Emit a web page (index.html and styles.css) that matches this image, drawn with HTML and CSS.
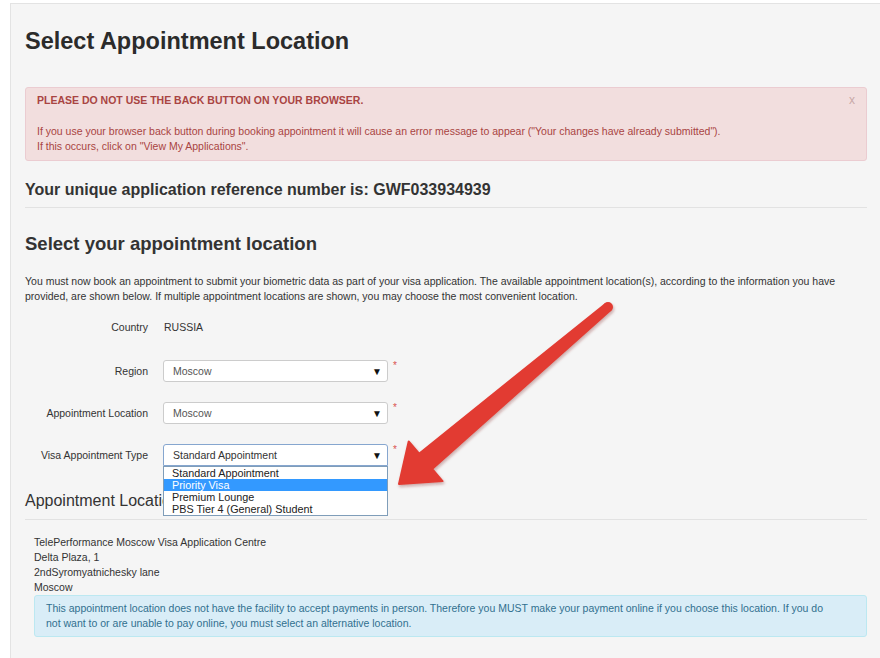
FILE: index.html
```html
<!DOCTYPE html>
<html>
  <head>
    <title>Select Appointment Location</title>
    <link rel="stylesheet" href="styles.css">
  </head>
  <body>
    <div class="page">
      <h1 class="page-title">Select Appointment Location</h1>

      <div class="alert alert-danger">
        <span class="close">x</span>
        <div class="alert-head">PLEASE DO NOT USE THE BACK BUTTON ON YOUR BROWSER.</div>
        <div>If you use your browser back button during booking appointment it will cause an error message to appear ("Your changes have already submitted").</div>
        <div>If this occurs, click on "View My Applications".</div>
      </div>

      <h3 class="ref-title">Your unique application reference number is: GWF033934939</h3>

      <h2 class="section-title">Select your appointment location</h2>
      <p class="intro">You must now book an appointment to submit your biometric data as part of your visa application. The available appointment location(s), according to the information you have provided, are shown below. If multiple appointment locations are shown, you may choose the most convenient location.</p>

      <div class="form">
        <div class="form-row">
          <label>Country</label>
          <span class="static">RUSSIA</span>
        </div>
        <div class="form-row">
          <label>Region</label>
          <div class="select"><span>Moscow</span><span class="caret">&#9660;</span></div>
          <span class="req">*</span>
        </div>
        <div class="form-row">
          <label>Appointment Location</label>
          <div class="select"><span>Moscow</span><span class="caret">&#9660;</span></div>
          <span class="req">*</span>
        </div>
        <div class="form-row">
          <label>Visa Appointment Type</label>
          <div class="select-wrap">
            <div class="select focused"><span>Standard Appointment</span><span class="caret">&#9660;</span></div>
            <ul class="options">
              <li>Standard Appointment</li>
              <li class="selected">Priority Visa</li>
              <li>Premium Lounge</li>
              <li>PBS Tier 4 (General) Student</li>
            </ul>
          </div>
          <span class="req">*</span>
        </div>
      </div>

      <h4 class="loc-title">Appointment Location</h4>
      <div class="address">
        <div>TelePerformance Moscow Visa Application Centre</div>
        <div>Delta Plaza, 1</div>
        <div>2ndSyromyatnichesky lane</div>
        <div>Moscow</div>
        <div class="alert alert-info">This appointment location does not have the facility to accept payments in person. Therefore you MUST make your payment online if you choose this location. If you do not want to or are unable to pay online, you must select an alternative location.</div>
      </div>
    </div>

    <!-- red annotation arrow drawn over the page -->
    <svg class="arrow" width="880" height="658" viewBox="0 0 880 658">
      <defs>
        <filter id="shadow" x="-10%" y="-10%" width="120%" height="120%">
          <feDropShadow dx="1" dy="2" stdDeviation="1.5" flood-color="#7a1a14" flood-opacity="0.35"/>
        </filter>
      </defs>
      <g filter="url(#shadow)" fill="#e23b32" stroke="#e23b32" stroke-width="2" stroke-linejoin="round">
        <polygon points="605.4,304 419.1,453.7 408.7,441.5 399,484 442.5,481.1 432.1,468.9 610.6,310"/>
        <circle cx="608" cy="307" r="4"/>
      </g>
    </svg>
  </body>
</html>
```

FILE: styles.css
```css
body {
  margin: 0;
  background: #fff;
  font-family: "Liberation Sans", Arial, sans-serif;
  color: #333;
  overflow: hidden;
  position: relative;
  height: 658px;
}
.page {
  margin: 3px 0 0 10px;
  width: 842px;
  padding: 0 14px 40px;
  background: #f5f5f5;
  border: 1px solid #e3e3e3;
}
.page-title {
  font-size: 23.5px;
  line-height: 26px;
  margin: 24px 0 33px;
  color: #2b2b2b;
}
.alert {
  border: 1px solid transparent;
  border-radius: 3px;
  font-size: 10.5px;
  line-height: 15px;
}
.alert-danger {
  position: relative;
  background: #f2dede;
  border-color: #ebccd1;
  color: #a94442;
  padding: 5px 11px 6px;
}
.alert-head {
  font-weight: bold;
  margin-bottom: 16px;
}
.close {
  position: absolute;
  right: 11px;
  top: 5px;
  font-size: 12px;
  color: #c9a9a9;
}
.ref-title {
  font-size: 16px;
  line-height: 18px;
  margin: 20px 0 0;
  padding-bottom: 8px;
  border-bottom: 1px solid #e2e2e2;
}
.section-title {
  font-size: 18.5px;
  line-height: 20px;
  margin: 26px 0 20px;
}
.intro {
  font-size: 10.5px;
  line-height: 15px;
  margin: 0 0 14px;
}
.form {
  font-size: 10.5px;
}
.form-row {
  display: flex;
  align-items: center;
  height: 22px;
  margin-bottom: 20px;
}
.form-row:first-child {
  margin-top: -2px;
  margin-bottom: 22px;
}
.form-row:last-child {
  margin-bottom: 0;
}
.form-row label {
  width: 123px;
  text-align: right;
  margin-right: 15px;
}
.static {
  padding-left: 1px;
}
.select-wrap {
  position: relative;
}
.select {
  height: 20px;
  border: 1px solid #ccc;
  border-radius: 3px;
  background: #fff;
  color: #555;
  display: flex;
  align-items: center;
  justify-content: space-between;
  padding: 0 0 0 9px;
  box-sizing: content-box;
  width: 214px;
}
.select.focused {
  border-color: #86a6cf;
  border-radius: 3px 3px 0 0;
  color: #333;
}
.caret {
  font-size: 10px;
  color: #111;
  margin-right: 5px;
}
.req {
  color: #d9534f;
  align-self: flex-start;
  margin-left: 5px;
  font-size: 10px;
  line-height: 12px;
}
.options {
  position: absolute;
  left: 0;
  top: 22px;
  width: 223px;
  margin: 0;
  padding: 0;
  list-style: none;
  background: #fff;
  border: 1px solid #7f9db9;
  color: #222;
  font-size: 10.8px;
  z-index: 2;
}
.options li {
  height: 12px;
  line-height: 12px;
  padding-left: 8px;
}
.options .selected {
  background: #3399ff;
  color: #fff;
}
.loc-title {
  font-size: 16px;
  font-weight: normal;
  line-height: 18px;
  margin: 26px 0 0;
  padding-bottom: 9px;
  border-bottom: 1px solid #e2e2e2;
}
.address {
  padding: 15px 0 0 9px;
  font-size: 10.5px;
  line-height: 15px;
}
.alert-info {
  background: #d9edf7;
  border-color: #bce8f1;
  color: #31708f;
  padding: 5px 28px 5px 11px;
  margin-top: 0;
}
.arrow {
  position: absolute;
  left: 0;
  top: 0;
  pointer-events: none;
}
```
